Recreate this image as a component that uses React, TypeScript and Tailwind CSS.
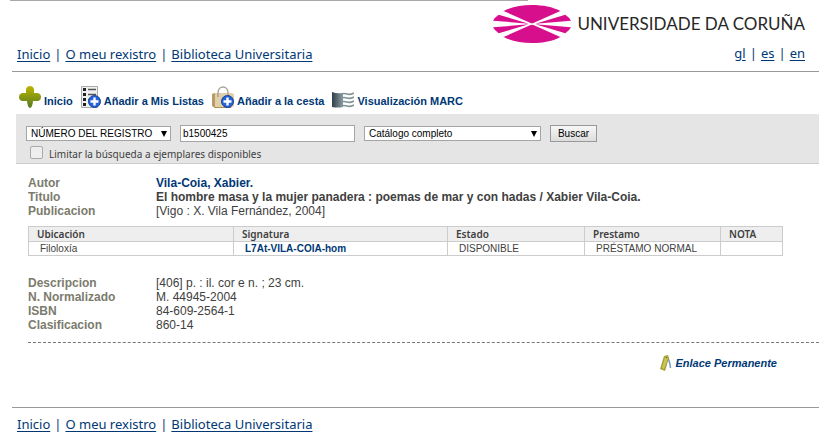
import type { ReactNode } from "react";

interface ToolLinkProps {
  label: string;
  children: ReactNode;
}

interface RecordRow {
  label: string;
  value: ReactNode;
}

const navLinks = ["Inicio", "O meu rexistro", "Biblioteca Universitaria"];
const languages = ["gl", "es", "en"];

const mainRows: RecordRow[] = [
  {
    label: "Autor",
    value: (
      <a href="#autor" className="font-bold text-[#003876]">
        Vila-Coia, Xabier.
      </a>
    ),
  },
  {
    label: "Titulo",
    value: (
      <strong>
        El hombre masa y la mujer panadera : poemas de mar y con hadas / Xabier
        Vila-Coia.
      </strong>
    ),
  },
  { label: "Publicacion", value: "[Vigo : X. Vila Fernández, 2004]" },
];

const detailRows: RecordRow[] = [
  { label: "Descripcion", value: "[406] p. : il. cor e n. ; 23 cm." },
  { label: "N. Normalizado", value: "M. 44945-2004" },
  { label: "ISBN", value: "84-609-2564-1" },
  { label: "Clasificacion", value: "860-14" },
];

function Logo() {
  return (
    <svg viewBox="0 0 234 114" className="h-[38px] w-[78px]" fill="#d80f8c" aria-hidden="true">
      <path d="M32 18C54 6 84 0 117 0s63 6 85 18l-79 35q-6 3-12 0z" />
      <path d="M32 96C54 108 84 114 117 114s63-6 85-18l-79-35q-6-3-12 0z" />
      <path d="M17 29L107 56L0 47Q5 37 17 29zM217 29L127 56L234 47Q229 37 217 29z" />
      <path d="M0 67L107 58L17 85Q5 77 0 67zM234 67L127 58L217 85Q229 77 234 67z" />
    </svg>
  );
}

function PlusBadge() {
  return (
    <>
      <circle cx="15.5" cy="15.5" r="6" fill="#2563d9" stroke="#173f9c" />
      <path d="M15.5 11.5v8M11.5 15.5h8" stroke="#fff" strokeWidth="2.4" />
    </>
  );
}

function CloverIcon() {
  return (
    <svg viewBox="0 0 22 22" className="size-[22px]" aria-hidden="true">
      <defs>
        <linearGradient id="clover" x1="0" y1="0" x2="0" y2="1">
          <stop offset="0" stopColor="#bdb500" />
          <stop offset="1" stopColor="#547a22" />
        </linearGradient>
      </defs>
      <path
        d="M11 0Q14 0 15 3Q15 6 15 7Q16 7 19 7Q22 8 22 11T19 15Q16 15 14 15Q14 17 13 20Q12 22 11 22T9 20Q8 17 8 15Q6 15 3 15Q0 14 0 11T3 7Q6 7 7 7Q7 6 7 3Q8 0 11 0z"
        fill="url(#clover)"
      />
    </svg>
  );
}

function ListIcon() {
  return (
    <svg viewBox="2 0 20 22" className="h-[22px] w-5" aria-hidden="true">
      <path d="M2.500 .5h16v21h-16z" fill="#f0f0f0" stroke="#aaa" />
      <path d="M4 2h3v3H4zM4 7h3v3H4zM4 12h3v3H4zM4 17h3v3H4z" fill="#222" />
      <path d="M9 3.500h8M9 8.500h8M9 13.500h2" stroke="#555" strokeWidth="1.3" />
      <PlusBadge />
    </svg>
  );
}

function BagIcon() {
  return (
    <svg viewBox="0 0 22 22" className="size-[22px]" aria-hidden="true">
      <path d="M0 8l3-1h16l3 1v12l-3 2H3l-3-2z" fill="#e0d0aa" />
      <path d="M0 8l3-1v15l-3-2z" fill="#b99b67" />
      <path d="M3 21.5h16" stroke="#a88b58" />
      <path d="M6 11V7c0-8 10-8 10 0v4" fill="none" stroke="#aaa397" strokeWidth="1.5" />
      <PlusBadge />
    </svg>
  );
}

function MarcIcon() {
  return (
    <svg viewBox="0 0 22 16" className="h-4 w-[22px]" aria-hidden="true">
      <defs>
        <linearGradient id="marc">
          <stop offset="0" stopColor="#303f49" />
          <stop offset="1" stopColor="#8b9ca3" />
        </linearGradient>
      </defs>
      <path d="M0 0q5 2 11 1v14q-5 1-11 0z" fill="url(#marc)" />
      <path
        d="M9 2q3-1 6 0t7-1M9 6q3-1 6 0t7-1M9 10q3-1 6 0t7-1M9 14q3-1 6 0t7-1"
        fill="none"
        stroke="#81949a"
        strokeWidth="1.7"
      />
    </svg>
  );
}

function TagIcon() {
  return (
    <svg viewBox="0 0 12 16" className="h-4 w-3" aria-hidden="true">
      <path d="M7 2q3 4 3.500 11" fill="none" stroke="#6e9dc4" strokeWidth="1.5" />
      <path d="M4 1l4-1 1 3-4 13-5-2z" fill="#a9a035" />
      <path d="M5 2l2-1 1 2-4 11-2-1z" fill="#cbc45c" />
      <circle cx="6.5" cy="2.5" r=".8" fill="#686424" />
    </svg>
  );
}

function ToolLink({ label, children }: ToolLinkProps) {
  return (
    <a href="#tool" className="flex items-end gap-[3px]">
      {children}
      <span className="pt-2">{label}</span>
    </a>
  );
}

function LinkBar({ links }: { links: string[] }) {
  return (
    <nav className="flex gap-1 font-['Noto_Sans',sans-serif] text-[13px] leading-5 text-[#003876]">
      {links.map((link, index) => (
        <span key={link} className="flex gap-1">
          {index > 0 && <span>|</span>}
          <a href="#nav" className="underline underline-offset-2">
            {link}
          </a>
        </span>
      ))}
    </nav>
  );
}

function RecordList({ rows }: { rows: RecordRow[] }) {
  return (
    <dl className="grid grid-cols-[128px_1fr] text-xs leading-[14px]">
      {rows.map((row) => (
        <div key={row.label} className="contents">
          <dt className="font-bold text-[#7b7b6d]">{row.label}</dt>
          <dd>{row.value}</dd>
        </div>
      ))}
    </dl>
  );
}

function SelectBox({ label, option, className }: { label: string; option: string; className: string }) {
  return (
    <div className={`relative ${className}`}>
      <select
        aria-label={label}
        className="block h-[15px] w-full appearance-none border border-[#a5a5a5] bg-white pl-1 text-[10px] leading-[13px] text-black"
      >
        <option>{option}</option>
      </select>
      <svg viewBox="0 0 6 6" className="pointer-events-none absolute top-[5px] right-1 size-[6px]" aria-hidden="true">
        <path d="M0 0h6L3 6z" />
      </svg>
    </div>
  );
}

export default function App() {
  return (
    <div className="bg-white font-['Liberation_Sans',sans-serif] text-[#404040]">
      <header className="ml-3">
        <div className="-ml-0.5 w-[518px] max-w-full border-t border-[#aaa]" />
        <div className="flex items-end justify-between pr-[14px] pl-[5px]">
          <div className="pb-[7px]">
            <LinkBar links={navLinks} />
          </div>
          <div className="flex flex-col items-end pt-1 pb-2">
            <div className="flex items-center gap-[6px]">
              <Logo />
              <span className="font-['Lato',sans-serif] text-[17px] leading-[38px] text-[#272727]">
                UNIVERSIDADE DA CORUÑA
              </span>
            </div>
            <LinkBar links={languages} />
          </div>
        </div>
      </header>
      <hr className="ml-3 border-[#999]" />

      <main className="pl-4">
        <div className="flex gap-2 pt-[14px] pb-[6px] pl-[3px] text-[11px] leading-[14px] font-bold text-[#003876]">
          <ToolLink label="Inicio">
            <CloverIcon />
          </ToolLink>
          <ToolLink label="Añadir a Mis Listas">
            <ListIcon />
          </ToolLink>
          <ToolLink label="Añadir a la cesta">
            <BagIcon />
          </ToolLink>
          <ToolLink label="Visualización MARC">
            <MarcIcon />
          </ToolLink>
        </div>

        <form
          className="border-b border-[#ccc] bg-[#e5e5e5] px-[10px] pt-[11px]"
          onSubmit={(event) => event.preventDefault()}
        >
          <div className="flex items-center gap-[9px] text-[10px]">
            <SelectBox label="Buscar por" option="NÚMERO DEL REGISTRO" className="w-[145px]" />
            <input
              aria-label="Texto de búsqueda"
              defaultValue="b1500425"
              className="h-[17px] w-[175px] border border-[#a5a5a5] bg-white px-[2px] text-black"
            />
            <SelectBox label="Catálogo" option="Catálogo completo" className="w-[177px]" />
            <button className="h-[17px] w-[47px] border border-[#999] bg-linear-to-b from-[#f7f7f7] to-[#ddd] leading-[15px] text-black">
              Buscar
            </button>
          </div>
          <label className="flex items-center gap-[6px] pt-[3px] pl-1 font-['Noto_Sans',sans-serif] text-[10px] leading-[18px]">
            <input
              type="checkbox"
              className="mb-1 size-[13px] appearance-none rounded-xs border border-[#aaa] bg-[#eee]"
            />
            Limitar la búsqueda a ejemplares disponibles
          </label>
        </form>

        <div className="pt-3 pl-3">
          <RecordList rows={mainRows} />

          <table className="mt-2 mb-5 w-[755px] max-w-full table-fixed border-collapse border border-[#ccc] text-left text-[10px] leading-[13px]">
            <colgroup>
              <col className="w-[205px]" />
              <col className="w-[214px]" />
              <col className="w-[137px]" />
              <col className="w-[136px]" />
              <col />
            </colgroup>
            <thead className="bg-[#eee] font-['Noto_Sans',sans-serif]">
              <tr>
                {["Ubicación", "Signatura", "Estado", "Prestamo", "NOTA"].map((heading) => (
                  <th key={heading} className="h-[15px] border border-[#ccc] px-2 py-0 font-semibold">
                    {heading}
                  </th>
                ))}
              </tr>
            </thead>
            <tbody>
              <tr>
                <td className="border border-[#ccc] px-[11px]">Filoloxía</td>
                <td className="border border-[#ccc] px-[11px] font-bold text-[#003876]">
                  <a href="#signatura">L7At-VILA-COIA-hom</a>
                </td>
                <td className="border border-[#ccc] px-[11px]">DISPONIBLE</td>
                <td className="border border-[#ccc] px-[11px]">PRÉSTAMO NORMAL</td>
                <td className="border border-[#ccc]" />
              </tr>
            </tbody>
          </table>

          <RecordList rows={detailRows} />

          <div className="mt-[10px] flex justify-end border-t border-dashed border-[#777] pt-3 pr-[42px]">
            <a
              href="#permalink"
              className="flex items-center gap-1 text-[11px] leading-4 font-bold text-[#003876] italic"
            >
              <TagIcon />
              Enlace Permanente
            </a>
          </div>
        </div>
      </main>

      <footer className="mt-9 ml-3 border-t border-[#999] pt-[6px] pl-[5px]">
        <LinkBar links={navLinks} />
      </footer>
    </div>
  );
}
